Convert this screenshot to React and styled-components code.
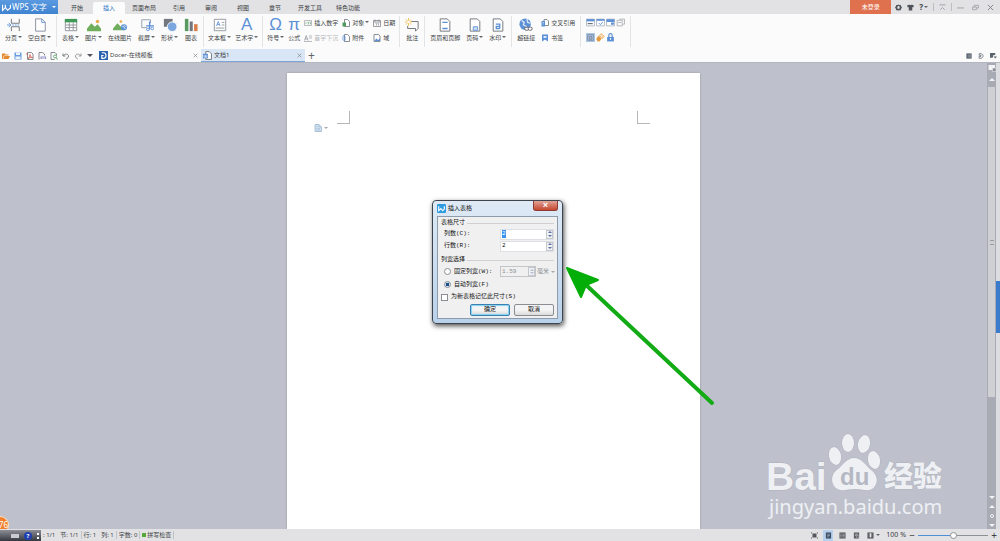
import { useEffect, useRef } from "react";
import styled, { createGlobalStyle } from "styled-components";

const BLUE = "#5b8fd6";
const GREY = "#666a70";

const icons = {
  pageBreak: (
    <>
      <path d="M5 1v5h9V1M5 15v-5h9v5" stroke={GREY} />
      <path d="M0 8h4M2 5.500l2.500 2.500L2 10.500" stroke={BLUE} />
      <path d="M6 8h9" stroke={BLUE} strokeDasharray="2 1" />
    </>
  ),
  blankPage: (
    <>
      <path d="M3 1h7l4 4v10H3z" stroke="#7c8696" fill="#fff" />
      <path d="M10 1v4h4" stroke={BLUE} />
    </>
  ),
  table: (
    <>
      <path d="M1.500 2h13v12.500h-13z" stroke="#8a8d92" fill="#fff" />
      <path d="M1 1h14v4H1z" fill="#3f9a58" />
      <path d="M2 8h12M2 11h12M6 5v9M10.500 5v9" stroke="#8a8d92" />
    </>
  ),
  picture: (
    <>
      <path d="M0 15V12l5-6 4 4 3-3 4 5v3z" fill="#6fae5c" />
      <circle cx="12" cy="4" r="2" fill="#eaa94a" />
    </>
  ),
  onlinePicture: (
    <>
      <path d="M0 14V12l5-6 4 4 3-3 1 7z" fill="#6fae5c" />
      <circle cx="9" cy="4" r="1.500" fill="#eaa94a" />
      <circle cx="12.500" cy="10.500" r="3.500" fill="#5b8fd6" />
      <path d="M10 9.500l3 1 1 2M12 8l3 2" stroke="#dbe8f8" />
    </>
  ),
  capture: (
    <>
      <path d="M12 6V2H2v9h6" stroke="#8c9aae" />
      <path d="M11 4v9M7 9h9" stroke={BLUE} strokeWidth="1.500" />
      <circle cx="9" cy="13" r="1.500" stroke={BLUE} />
      <circle cx="14" cy="12" r="1.500" stroke={BLUE} />
    </>
  ),
  shapes: (
    <>
      <path d="M1 1h10v9H1z" fill="#73777e" />
      <circle cx="10.500" cy="10" r="5.500" fill="#7ba6e0" stroke="#fff" />
    </>
  ),
  chart: (
    <>
      <path d="M1 1h4v14H1z" fill="#579a5f" />
      <path d="M6.500 4h3.500v11H6.500z" fill="#73777e" />
      <path d="M11.500 7h4v8h-4z" fill="#d9804a" />
    </>
  ),
  textBox: (
    <>
      <path d="M1.500 1.500h13v13h-13z" stroke="#8c9096" fill="#fff" />
      <path d="M4 9l2-5 2 5M5 7.500h2" stroke={BLUE} />
      <path d="M10 5h3M10 8h3M3 11.500h10" stroke="#8c9096" />
    </>
  ),
  comment: (
    <>
      <path d="M7 4h8v8l-3 3v-3H3V9" stroke="#666a70" />
      <path d="M4 0v9M0 4.500h8M1 1.500l6 6M7 1.500l-6 6" stroke="#f1bd4b" />
      <circle cx="4" cy="4.500" r="1.500" fill="#fff" />
    </>
  ),
  header: (
    <>
      <path d="M2.500 1h8l3 3v11h-11z" stroke={GREY} fill="#fff" />
      <path d="M5 5h6M5 12h6" stroke={BLUE} strokeWidth="1.500" />
    </>
  ),
  pageNumber: (
    <>
      <path d="M2.500 1h8l3 3v11h-11z" stroke={GREY} fill="#fff" />
      <path d="M6 10h5v4H6z" stroke={BLUE} fill="#cfe0f7" />
    </>
  ),
  watermark: (
    <>
      <path d="M2.500 1h8l3 3v11h-11z" stroke={GREY} fill="#fff" />
      <path d="M5.500 7h4.500v5M10 9.500H6v2.500h4" stroke={BLUE} strokeWidth="1.500" />
    </>
  ),
  hyperlink: (
    <>
      <circle cx="7" cy="7" r="6.500" fill="#5b8fd6" />
      <path d="M3 3l3 2-1 3 4 2M9 1l1 4 3 1" stroke="#dbe8f8" strokeWidth="1.500" />
      <rect x="6.500" y="10.500" width="4.500" height="3.500" rx="1.500" stroke="#55595f" fill="#fff" />
      <rect x="10.500" y="10.500" width="4.500" height="3.500" rx="1.500" stroke="#55595f" fill="#fff" />
    </>
  ),
  number: (
    <>
      <path d="M1 3h14v10H1z" stroke="#7c8086" />
      <path d="M4 6v4M7 6h2v4H7M11 6h2v4h-2" stroke="#4f9b5d" />
    </>
  ),
  dropCap: (
    <>
      <path d="M1 13L4.500 3 8 13M2 10h5" stroke="#a9abb0" strokeWidth="2" />
      <path d="M10 4h6M10 8h6M0 15h16" stroke="#b7b9bd" strokeWidth="2" />
    </>
  ),
  object: (
    <>
      <path d="M5 1h6l4 4v10H5z" stroke="#666a70" strokeWidth="1.500" fill="#fff" />
      <path d="M1 7h7v8H1z" fill="#4f9b5d" />
    </>
  ),
  attachment: (
    <>
      <path d="M5 1h6l4 4v10H5z" stroke="#666a70" strokeWidth="1.500" fill="#fff" />
      <path d="M2 12V5a2 2 0 0 1 4 0v7a1.500 1.500 0 0 1-3 0" stroke={BLUE} strokeWidth="1.500" />
    </>
  ),
  date: (
    <>
      <path d="M1 3h14v12H1zM1 6h14M4 1v4M12 1v4" stroke="#7c8086" strokeWidth="1.500" />
      <path d="M5 9h2v4M9 9h2v4" stroke={GREY} />
    </>
  ),
  field: (
    <>
      <path d="M2 1h9l3 3v11H2z" stroke={GREY} strokeWidth="1.500" fill="#fff" />
      <path d="M3 13l4-4 3 3 4-3v5H3z" fill="#5b8fd6" />
    </>
  ),
  crossRef: (
    <>
      <path d="M6 1h6l3 3v9H6z" stroke={GREY} strokeWidth="1.500" fill="#fff" />
      <path d="M1 4h7v11H1z" fill="#5b8fd6" />
      <path d="M3 7h3M3 10h3" stroke="#fff" />
    </>
  ),
  bookmark: (
    <>
      <path d="M2 1h12v14l-6-4-6 4z" fill="#5b8fd6" />
      <path d="M5 4h6v4H5z" fill="#dbe8f8" />
    </>
  ),
  formText: (
    <>
      <path d="M1 2h14v12H1z" stroke="#7c8ca4" fill="#fff" />
      <path d="M1 2h14v4H1z" fill="#5b8fd6" />
      <path d="M3 10h9" stroke={GREY} strokeWidth="2" />
    </>
  ),
  formCheck: (
    <>
      <path d="M1 2h14v12H1z" stroke="#7c8ca4" fill="#fff" />
      <path d="M1 2h14v3H1z" fill="#5b8fd6" />
      <path d="M5 9l3 3 4-5" stroke={BLUE} strokeWidth="1.500" />
    </>
  ),
  formCombo: (
    <>
      <path d="M1 2h14v12H1z" stroke="#7c8ca4" fill="#fff" />
      <path d="M1 2h14v5H1zM9 8h5v4H9z" fill="#5b8fd6" />
    </>
  ),
  formReset: (
    <path d="M2 4h9v10H2zM6 2h9v9h-3M4 8h5" stroke="#a9abb0" strokeWidth="1.500" />
  ),
  formShade: (
    <>
      <path d="M0 0h16v16H0z" fill="#a9c5e8" />
      <path d="M3 3h10v10H3z" stroke={GREY} />
      <path d="M6 6v5h4V6z" stroke={GREY} />
    </>
  ),
  eraser: (
    <>
      <path d="M1 9l4-4 5 5-4 5H3l-2-3z" fill="#e39b3e" />
      <path d="M6 4l4-3 5 5-4 4z" fill="#f5dcb4" stroke="#e39b3e" />
    </>
  ),
  lock: (
    <>
      <path d="M2 7h12v8H2z" fill="#5b8fd6" />
      <path d="M5 7V4a3 3 0 0 1 6 0v3" stroke={BLUE} strokeWidth="2" />
      <path d="M8 9v3" stroke="#fff" strokeWidth="2" />
    </>
  ),
  open: <path d="M0 3h6l1 2h6v2H4l-3 7H0zM5 8h11l-3 6H2z" fill="#e58a2c" />,
  save: (
    <>
      <path d="M1 1h14v14H1z" fill="#6c9edd" />
      <path d="M4 1h8v5H4zM3 9h10v5H3z" fill="#eff5fc" />
    </>
  ),
  pdf: (
    <>
      <path d="M3 1h8l3 3v11H3z" stroke={GREY} strokeWidth="1.500" />
      <path d="M4 13c3-2 4-5 4-8 0 4 3 6 5 6-3 0-6 0-9 2M0 4h4" stroke="#d2483c" strokeWidth="1.500" />
    </>
  ),
  print: (
    <>
      <path d="M2 15V1h7l4 3v3" stroke={GREY} strokeWidth="1.500" />
      <path d="M5 9h11v5H5z" fill="#8e8fc9" />
      <path d="M7 12h7" stroke="#fff" strokeWidth="2" />
    </>
  ),
  preview: (
    <>
      <path d="M13 7V4l-3-3H2v14h7" stroke={GREY} strokeWidth="1.500" />
      <circle cx="10" cy="9" r="3" stroke="#4f9b5d" strokeWidth="1.500" />
      <path d="M12 11l3 4" stroke="#4f9b5d" strokeWidth="2" />
    </>
  ),
  undo: <path d="M2 3v5h5M2 8c3-5 11-5 11 0 0 3-2 5-5 6" stroke="#7e8187" strokeWidth="2" />,
  redo: <path d="M14 3v5H9M14 8C11 3 3 3 3 8c0 3 2 5 5 6" stroke="#9b9da2" strokeWidth="2" />,
  docer: (
    <>
      <path d="M0 0h16v16H0z" fill="#2b62ad" />
      <path d="M5 3h3c6 0 6 10 0 10H5V8h3" stroke="#fff" strokeWidth="2" />
    </>
  ),
  doc: (
    <>
      <path d="M5 1h6l4 4v10H5z" stroke={GREY} strokeWidth="1.500" fill="#fff" />
      <path d="M0 5h9v8H0z" fill="#5b8fd6" />
      <path d="M2 7v4h5V7M4.500 7v4" stroke="#fff" />
    </>
  ),
  gear: (
    <path
      fillRule="evenodd"
      d="M8 1l2 1 3 0 1 3 2 3-2 3-1 3-3 0-2 1-2-1-3 0-1-3-2-3 2-3 1-3 3 0zM8 4L5 7l1 4h4l1-4z"
      fill="#505359"
    />
  ),
  shirt: <path d="M5 1c1 2 5 2 6 0l5 3-2 4-2-1v8H4V7L2 8 0 4z" fill="#505359" />,
  collapse: <path d="M1 2h14M3 13l5-5 5 5" stroke="#9b9da2" strokeWidth="2" />,
  minimize: <path d="M0 9h16" stroke="#9b9da2" strokeWidth="2" />,
  restore: <path d="M1 7h9v6H1zM5 7V3h10v6h-5" stroke="#a0a2a7" strokeWidth="2" />,
  close: <path d="M2 2l12 12M14 2L2 14" stroke="#777a80" strokeWidth="2" />,
  panel: (
    <>
      <path d="M1 1h14v14H1z" fill="#5c6470" />
      <path d="M6 4v8M8 5h5M8 8h5M8 11h5" stroke="#c8ccd2" />
    </>
  ),
  docPanel: <path d="M3 2h6c6 2 6 9 0 12H3V9h5V6H3z" stroke="#5c6470" strokeWidth="2" />,
  listPanel: <path d="M0 2h12v5H8l-2 6H0zM8 10h8l-4 5z" fill="#5c6470" />,
  fullscreen: <path d="M4 4h8v8H4zM0 3V1l3 2M16 3V1l-3 2M0 13v2l3-2M16 13v2l-3-2" fill="#55585e" stroke="#55585e" />,
  pageView: (
    <>
      <path d="M2 1h12v14H2z" fill="#3f4f66" />
      <path d="M5 5h6M5 8h6M5 11h4" stroke="#dbe8f8" />
    </>
  ),
  outline: (
    <>
      <path d="M1 1h14v14H1z" fill="#5c5f65" />
      <path d="M3 5h3M8 5h5M3 8h3M8 8h5M3 11h3M8 11h5" stroke="#e4e4e6" />
    </>
  ),
  web: (
    <>
      <path d="M2 1h12v14H2z" fill="#5c5f65" />
      <path d="M5 5h6M5 8h3" stroke="#e4e4e6" strokeWidth="1.500" />
      <circle cx="11" cy="11" r="3" fill="#5c5f65" stroke="#e4e4e6" />
    </>
  ),
  book: (
    <>
      <path d="M1 1h14v14H1z" fill="#5c5f65" />
      <path d="M6 3h4v8l-2 2-2-2z" fill="#e4e4e6" />
    </>
  ),
  paste: (
    <>
      <path d="M2 1h8l5 5v9H2z" fill="#cfe0f1" stroke="#9ab3cf" strokeWidth="1.500" />
      <path d="M5 5h3M5 9h7M5 12h7M10 1v5h5" stroke="#9ab3cf" />
    </>
  ),
  ruler: (
    <>
      <path d="M1 2h13v10H1z" fill="#f2f3f5" />
      <path d="M9 8h7v7H9z" fill="#8b8e98" stroke="#f2f3f5" />
    </>
  ),
  wps: <path d="M1 3v10l5-5 4 5 5-4V3M6 8V3" stroke="#fff" strokeWidth="2" />,
  dialogLogo: (
    <>
      <rect width="16" height="16" rx="2" fill="#2f9be0" />
      <path d="M3 4v8l4-4 3 4 3-3V4" stroke="#fff" strokeWidth="2" />
    </>
  ),
};

function Icon({ name, size = 8 }) {
  return (
    <svg width={size} height={size} viewBox="0 0 16 16" fill="none" aria-hidden="true">
      {icons[name]}
    </svg>
  );
}

function Tool({ icon, glyph, label, menu }) {
  return (
    <ToolButton type="button">
      {glyph ? <Glyph>{glyph}</Glyph> : <Icon name={icon} size={14} />}
      <ToolLabel>
        {label}
        {menu && <Caret />}
      </ToolLabel>
    </ToolButton>
  );
}

function SmallTool({ icon, label, menu, disabled }) {
  return (
    <SmallButton type="button" disabled={disabled}>
      <Icon name={icon} />
      <span>
        {label}
        {menu && <Caret />}
      </span>
    </SmallButton>
  );
}

const menus = [
  { label: "开始" },
  { label: "插入", active: true },
  { label: "页面布局", wide: true },
  { label: "引用" },
  { label: "审阅" },
  { label: "视图" },
  { label: "章节" },
  { label: "开发工具", wide: true },
  { label: "特色功能", wide: true },
];

const quickActions = [
  ["open", "打开"],
  ["save", "保存"],
  ["pdf", "输出为PDF"],
  ["print", "打印"],
  ["preview", "打印预览"],
  ["undo", "撤消"],
  ["redo", "恢复"],
];

function TitleBar() {
  return (
    <Title>
      <Brand type="button">
        <Icon name="wps" size={9} />
        WPS 文字
        <BrandCaret />
      </Brand>
      <MenuTabs>
        {menus.map((m) => (
          <MenuTab key={m.label} type="button" $active={m.active} $wide={m.wide}>
            {m.label}
          </MenuTab>
        ))}
      </MenuTabs>
      <Login type="button">未登录</Login>
      <WindowTools>
        <IconButton aria-label="设置"><Icon name="gear" size={7} /></IconButton>
        <IconButton aria-label="皮肤"><Icon name="shirt" size={7} /></IconButton>
        <HelpButton type="button">?<Caret /></HelpButton>
        <Divider />
        <IconButton aria-label="折叠功能区"><Icon name="collapse" size={7} /></IconButton>
        <Divider />
      </WindowTools>
      <WindowButtons>
        <IconButton aria-label="最小化"><Icon name="minimize" size={7} /></IconButton>
        <IconButton aria-label="还原"><Icon name="restore" size={7} /></IconButton>
        <IconButton aria-label="关闭"><Icon name="close" size={7} /></IconButton>
      </WindowButtons>
    </Title>
  );
}

function Ribbon() {
  return (
    <RibbonBar>
      <Group>
        <Tool icon="pageBreak" label="分页" menu />
        <Tool icon="blankPage" label="空白页" menu />
      </Group>
      <Group>
        <Tool icon="table" label="表格" menu />
        <Tool icon="picture" label="图片" menu />
        <Tool icon="onlinePicture" label="在线图片" />
        <Tool icon="capture" label="截屏" menu />
        <Tool icon="shapes" label="形状" menu />
        <Tool icon="chart" label="图表" />
      </Group>
      <Group $tight>
        <Tool icon="textBox" label="文本框" menu />
        <Tool glyph="A" label="艺术字" menu />
      </Group>
      <Group $tight>
        <Tool glyph="Ω" label="符号" menu />
        <Tool glyph="π" label="公式" />
        <Stack>
          <SmallTool icon="number" label="插入数字" />
          <SmallTool icon="dropCap" label="首字下沉" disabled />
        </Stack>
        <Stack>
          <SmallTool icon="object" label="对象" menu />
          <SmallTool icon="attachment" label="附件" />
        </Stack>
        <Stack>
          <SmallTool icon="date" label="日期" />
          <SmallTool icon="field" label="域" />
        </Stack>
      </Group>
      <Group>
        <Tool icon="comment" label="批注" />
      </Group>
      <Group>
        <Tool icon="header" label="页眉和页脚" />
        <Tool icon="pageNumber" label="页码" menu />
        <Tool icon="watermark" label="水印" menu />
      </Group>
      <Group>
        <Tool icon="hyperlink" label="超链接" />
        <Stack>
          <SmallTool icon="crossRef" label="交叉引用" />
          <SmallTool icon="bookmark" label="书签" />
        </Stack>
      </Group>
      <Group>
        <FormGrid>
          <IconButton aria-label="文字型窗体域"><Icon name="formText" size={9} /></IconButton>
          <IconButton aria-label="复选框型窗体域"><Icon name="formCheck" size={9} /></IconButton>
          <IconButton aria-label="下拉型窗体域"><Icon name="formCombo" size={9} /></IconButton>
          <IconButton aria-label="窗体域选项"><Icon name="formReset" size={9} /></IconButton>
          <IconButton aria-label="窗体域底纹"><Icon name="formShade" size={9} /></IconButton>
          <IconButton aria-label="重新设置"><Icon name="eraser" size={9} /></IconButton>
          <IconButton aria-label="保护窗体"><Icon name="lock" size={9} /></IconButton>
        </FormGrid>
      </Group>
    </RibbonBar>
  );
}

function DocumentBar() {
  return (
    <DocBar>
      <QuickAccess>
        {quickActions.map(([icon, label]) => (
          <IconButton key={icon} aria-label={label}>
            <Icon name={icon} />
          </IconButton>
        ))}
      </QuickAccess>
      <MoreButton aria-label="自定义"><BigCaret /></MoreButton>
      <DocTab>
        <Icon name="docer" size={9} />
        <DocName>Docer-在线模板</DocName>
        <IconButton aria-label="关闭标签"><Icon name="close" size={5} /></IconButton>
      </DocTab>
      <DocTab $active>
        <Icon name="doc" size={9} />
        <DocName>文档1</DocName>
        <IconButton aria-label="关闭标签"><Icon name="close" size={5} /></IconButton>
      </DocTab>
      <AddTab type="button" aria-label="新建标签">+</AddTab>
      <PanelTools>
        <IconButton aria-label="任务窗格"><Icon name="panel" size={6} /></IconButton>
        <IconButton aria-label="文档窗格"><Icon name="docPanel" size={6} /></IconButton>
        <IconButton aria-label="标签列表"><Icon name="listPanel" size={7} /></IconButton>
      </PanelTools>
    </DocBar>
  );
}

function Spinner({ disabled }) {
  return (
    <Steps>
      <Step type="button" aria-label="增加" disabled={disabled}><StepMark $up /></Step>
      <Step type="button" aria-label="减少" disabled={disabled}><StepMark /></Step>
    </Steps>
  );
}

function InsertTableDialog() {
  const columns = useRef(null);

  useEffect(() => {
    columns.current.focus();
    columns.current.select();
  }, []);

  return (
    <Dialog role="dialog" aria-labelledby="dialog-title">
      <DialogTitle>
        <Icon name="dialogLogo" size={9} />
        <span id="dialog-title">插入表格</span>
        <DialogClose type="button" aria-label="关闭">×</DialogClose>
      </DialogTitle>
      <DialogBody>
        <Legend>表格尺寸</Legend>
        <FieldRow>
          <label htmlFor="columns">列数(C):</label>
          <NumberBox>
            <NumberInput id="columns" ref={columns} defaultValue="2" />
            <Spinner />
          </NumberBox>
        </FieldRow>
        <FieldRow>
          <label htmlFor="rows">行数(R):</label>
          <NumberBox>
            <NumberInput id="rows" defaultValue="2" />
            <Spinner />
          </NumberBox>
        </FieldRow>
        <Legend $spaced>列宽选择</Legend>
        <FieldRow $tall>
          <Choice>
            <Radio type="radio" name="width" />
            固定列宽(W):
          </Choice>
          <NumberBox $short $disabled>
            <NumberInput aria-label="固定列宽" defaultValue="1.59" disabled />
            <Spinner disabled />
          </NumberBox>
          <Unit aria-label="单位" disabled>
            <option>毫米</option>
          </Unit>
          <Caret $muted />
        </FieldRow>
        <FieldRow $tall>
          <Choice>
            <Radio type="radio" name="width" defaultChecked />
            自动列宽(F)
          </Choice>
        </FieldRow>
        <Remember>
          <Checkbox type="checkbox" />
          为新表格记忆此尺寸(S)
        </Remember>
        <Actions>
          <DialogButton type="button" $primary>确定</DialogButton>
          <DialogButton type="button">取消</DialogButton>
        </Actions>
      </DialogBody>
    </Dialog>
  );
}

function Watermark() {
  return (
    <WatermarkArt viewBox="0 0 180 90" width="180" height="90" aria-label="Baidu 经验">
      <g fill="#eef0f4" stroke="#b0b3be" strokeWidth="1" paintOrder="stroke">
        <text x="-2" y="59" fontSize="39" fontWeight="700" fontFamily="Liberation Sans, sans-serif">
          Bai
        </text>
        <g transform="translate(-3 -1)">
          <ellipse cx="70" cy="26" rx="6" ry="9" transform="rotate(-12 70 26)" />
          <ellipse cx="83" cy="13" rx="6" ry="9" />
          <ellipse cx="99" cy="14" rx="6" ry="9" transform="rotate(12 99 14)" />
          <ellipse cx="109" cy="30" rx="6" ry="9" transform="rotate(-12 109 30)" />
          <path d="M89 28C82 28 78 35 73 39C66 44 66 51 69 56C74 63 82 59 90 59C98 59 106 63 110 56C114 50 111 44 106 40C100 35 97 28 89 28Z" />
        </g>
        <text x="116" y="56" fontSize="29" fontWeight="900" fontFamily="Noto Sans CJK SC, sans-serif">
          经验
        </text>
        <text x="1" y="83" fontSize="20" strokeWidth="0" fontFamily="Noto Sans, sans-serif">
          jingyan.baidu.com
        </text>
      </g>
      <text x="72" y="54" fontSize="24" fontWeight="700" fill="#b5b8c3" fontFamily="Liberation Sans, sans-serif">
        du
      </text>
    </WatermarkArt>
  );
}

function Workspace() {
  return (
    <Work>
      <Canvas>
        <Page>
          <Margins>
            <Corner />
            <Corner $right />
          </Margins>
          <PasteHint type="button" aria-label="粘贴选项">
            <Icon name="paste" />
            <Caret $muted />
          </PasteHint>
        </Page>
      </Canvas>
      <ScrollBar>
        <Icon name="ruler" />
        <ScrollArrow $up />
        <Track>
          <Thumb><Grip /></Thumb>
        </Track>
        <ScrollArrow />
        <ScrollArrow $up />
        <BrowseDot />
        <ScrollArrow />
      </ScrollBar>
      <SideStrip>
        <SideHandle type="button" aria-label="展开任务窗格" />
      </SideStrip>
      <InsertTableDialog />
      <Pointer viewBox="0 0 152 142" width="152" height="142" aria-hidden="true">
        <path d="M20 19L147 138" stroke="#12ab16" strokeWidth="4" strokeLinecap="round" />
        <path d="M2 3L33 15L21 20L16 32Z" fill="#04ae08" stroke="#04ae08" strokeWidth="2" strokeLinejoin="round" />
      </Pointer>
      <Watermark />
      <Badge>76</Badge>
    </Work>
  );
}

function StatusBar() {
  return (
    <Status>
      <ImeBar>
        <KeyboardMark />
        <HelpDot>?</HelpDot>
        <ImeMore />
      </ImeBar>
      <StatusInfo>
        <StatusItem>: 1/1</StatusItem>
        <StatusItem $line>节: 1/1</StatusItem>
        <StatusItem>行: 1</StatusItem>
        <StatusItem $line>列: 1</StatusItem>
        <StatusItem $line>字数: 0</StatusItem>
        <StatusItem $line><SpellDot />拼写检查</StatusItem>
      </StatusInfo>
      <Views>
        <ViewButton aria-label="全屏显示"><Icon name="fullscreen" size={7} /></ViewButton>
        <ViewButton aria-label="页面视图" $active><Icon name="pageView" size={7} /></ViewButton>
        <ViewButton aria-label="大纲视图"><Icon name="outline" size={7} /></ViewButton>
        <ViewButton aria-label="Web版式"><Icon name="web" size={7} /></ViewButton>
        <ViewButton aria-label="阅读版式"><Icon name="book" size={7} /></ViewButton>
      </Views>
      <Caret />
      <Zoom htmlFor="zoom">100 %</Zoom>
      <ZoomButton type="button" aria-label="缩小">−</ZoomButton>
      <Slider id="zoom" type="range" min="0" max="100" defaultValue="50" />
      <ZoomButton type="button" aria-label="放大">+</ZoomButton>
    </Status>
  );
}

export default function App() {
  return (
    <>
      <GlobalStyle />
      <Shell>
        <TitleBar />
        <Ribbon />
        <DocumentBar />
        <Workspace />
        <StatusBar />
      </Shell>
    </>
  );
}

const GlobalStyle = createGlobalStyle`
  * {
    box-sizing: border-box;
  }
  body {
    margin: 0;
    overflow: hidden;
    font-family: "Noto Sans", "Noto Sans CJK SC", sans-serif;
    font-size: 6px;
    line-height: 8px;
    color: #3c3f44;
  }
  button, input, select {
    font: inherit;
    color: inherit;
    margin: 0;
    padding: 0;
    border: none;
    background: none;
    outline: none;
  }
  button {
    white-space: nowrap;
  }
  svg {
    display: block;
    flex-shrink: 0;
  }
`;

const Shell = styled.div`
  display: flex;
  flex-direction: column;
  height: 100vh;
`;

const Caret = styled.span`
  display: inline-block;
  flex-shrink: 0;
  margin-left: 1px;
  vertical-align: 2px;
  border: solid transparent;
  border-width: 2px 2px 0;
  border-top-color: ${({ $muted }) => ($muted ? "#a5a8ad" : "#63666b")};
`;

const BigCaret = styled.span`
  border: solid transparent;
  border-width: 3px 3px 0;
  border-top-color: #505359;
`;

const IconButton = styled.button`
  display: flex;
  align-items: center;
  justify-content: center;
`;

const MoreButton = styled(IconButton)`
  padding-right: 4px;
`;

const Title = styled.header`
  display: flex;
  height: 14px;
  background: #e2e2e4;
`;

const Brand = styled.button`
  display: flex;
  align-items: center;
  gap: 1px;
  width: 58px;
  padding-left: 2px;
  background: linear-gradient(#5b9ae0, #3f83d0);
  color: #fff;
  font-size: 8px;
`;

const BrandCaret = styled(Caret)`
  margin-left: auto;
  margin-right: 2px;
  border-top-color: #fff;
`;

const MenuTabs = styled.nav`
  display: flex;
  flex: 1;
  padding-left: 3px;
`;

const MenuTab = styled.button`
  width: ${({ $wide }) => ($wide ? "38px" : "32px")};
  margin-top: 2px;
  border-radius: 2px 2px 0 0;
  background: ${({ $active }) => ($active ? "#fbfbfb" : "none")};
  color: ${({ $active }) => ($active ? "#2f74c8" : "#3c3f44")};
`;

const Login = styled.button`
  width: 41px;
  background: #e0714f;
  color: #fff;
`;

const WindowTools = styled.div`
  display: flex;
  align-items: center;
  gap: 5px;
  padding-left: 4px;
`;

const HelpButton = styled.button`
  font-size: 8px;
  font-weight: 700;
`;

const Divider = styled.span`
  width: 1px;
  height: 8px;
  background: #bcbdc1;
`;

const WindowButtons = styled.div`
  display: flex;
  align-items: center;
  gap: 8px;
  padding: 0 6px 0 5px;
`;

const RibbonBar = styled.div`
  display: flex;
  height: 35px;
  padding-top: 2px;
  background: #fbfbfb;
`;

const Group = styled.div`
  display: flex;
  height: 31px;
  gap: ${({ $tight }) => ($tight ? "4px" : "6px")};
  padding: 0 ${({ $tight }) => ($tight ? "4px" : "5px")};
  border-right: 1px solid #e3e4e6;
`;

const ToolButton = styled.button`
  display: flex;
  flex-direction: column;
  align-items: center;
  gap: 2px;
  padding-top: 2px;
`;

const ToolLabel = styled.span`
  display: block;
`;

const Glyph = styled.span`
  height: 14px;
  color: #5b8fd6;
  font-family: "Liberation Sans", sans-serif;
  font-size: 17px;
  line-height: 14px;
`;

const Stack = styled.div`
  display: flex;
  flex-direction: column;
  gap: 6px;
  padding-top: 2px;
`;

const SmallButton = styled.button`
  display: flex;
  align-items: center;
  gap: 2px;
  height: 9px;

  &:disabled {
    color: #b4b6ba;
  }
`;

const FormGrid = styled.div`
  display: grid;
  grid-template-columns: repeat(4, 9px);
  align-content: start;
  gap: 6px 1px;
  padding-top: 2px;
`;

const DocBar = styled.div`
  display: flex;
  align-items: center;
  height: 14px;
  background: #fbfbfb;
  border-bottom: 1px solid #b3b5bf;
`;

const QuickAccess = styled.div`
  display: flex;
  gap: 4px;
  padding: 0 5px 0 2px;
`;

const DocTab = styled.div`
  display: flex;
  align-items: center;
  gap: 2px;
  width: 104px;
  height: 13px;
  padding: 0 3px 0 2px;
  border-bottom: 1px solid transparent;
  ${({ $active }) =>
    $active &&
    `
    background: #d9e6f5;
    border-bottom-color: #7ea3d6;
  `}
`;

const DocName = styled.span`
  flex: 1;
`;

const AddTab = styled.button`
  padding-left: 3px;
  color: #63666b;
  font-size: 12px;
`;

const PanelTools = styled.div`
  display: flex;
  gap: 6px;
  margin-left: auto;
  padding-right: 3px;
`;

const Work = styled.main`
  position: relative;
  display: flex;
  flex: 1;
  min-height: 0;
  overflow: hidden;
`;

const Canvas = styled.div`
  display: flex;
  flex: 1;
  justify-content: center;
  padding-top: 10px;
  background: #bec1cb;
`;

const Page = styled.article`
  width: 413px;
  padding-top: 38px;
  background: #fff;
  box-shadow: 0 0 2px #8f929c;
`;

const Margins = styled.div`
  display: flex;
  justify-content: space-between;
  padding: 0 50px;
`;

const Corner = styled.span`
  width: 13px;
  height: 13px;
  border: solid #b5b6b9;
  border-width: ${({ $right }) => ($right ? "0 0 1px 1px" : "0 1px 1px 0")};
`;

const PasteHint = styled.button`
  display: flex;
  align-items: center;
  gap: 1px;
  margin-left: 27px;
`;

const ScrollBar = styled.div`
  display: flex;
  flex-direction: column;
  align-items: center;
  gap: 6px;
  width: 9px;
  padding: 1px 0 2px;
  background: #a8aab4;
`;

const ScrollArrow = styled.span`
  border: 3px solid transparent;
  border-width: ${({ $up }) => ($up ? "0 3px 3px" : "3px 3px 0")};
  border-color: ${({ $up }) => ($up ? "transparent transparent #f2f3f5" : "#f2f3f5 transparent transparent")};
`;

const Track = styled.div`
  flex: 1;
  width: 7px;
`;

const Thumb = styled.div`
  display: flex;
  align-items: center;
  justify-content: center;
  height: 77%;
  background: #cfd0d4;
`;

const Grip = styled.span`
  width: 4px;
  height: 5px;
  border: solid #9a9ca3;
  border-width: 1px 0;
`;

const BrowseDot = styled.span`
  width: 4px;
  height: 4px;
  border: 1px solid #f2f3f5;
  border-radius: 50%;
`;

const SideStrip = styled.aside`
  width: 4px;
  padding-top: 218px;
  background: #dcdde1;
`;

const SideHandle = styled.button`
  display: block;
  width: 100%;
  height: 52px;
  background: #3b7bcb;
`;

const Dialog = styled.section`
  position: absolute;
  top: 137px;
  left: 432px;
  width: 131px;
  padding: 0 4px 4px;
  border: 1px solid #3d444e;
  border-radius: 4px;
  background: linear-gradient(#dfeaf6, #b9d1ea);
  box-shadow: 1px 2px 5px rgba(0, 0, 0, 0.7);
  font-family: "Liberation Mono", "Noto Sans CJK SC", monospace;
  color: #111;
`;

const DialogTitle = styled.div`
  display: flex;
  align-items: center;
  gap: 2px;
  height: 15px;
`;

const DialogClose = styled.button`
  align-self: flex-start;
  width: 25px;
  height: 10px;
  margin-left: auto;
  border: 1px solid #8d3b33;
  border-top: none;
  border-radius: 0 0 3px 3px;
  background: linear-gradient(#e3a397, #c4472f);
  color: #fff;
  font-size: 9px;
  font-weight: 700;
  line-height: 8px;
`;

const DialogBody = styled.div`
  display: flex;
  flex-direction: column;
  padding: 2px 3px;
  border: 1px solid #8d9cad;
  background: #f0f0f0;
`;

const Legend = styled.div`
  display: flex;
  align-items: center;
  gap: 2px;
  margin-top: ${({ $spaced }) => ($spaced ? "4px" : "0")};

  &::after {
    content: "";
    flex: 1;
    height: 1px;
    background: #d0d0d2;
  }
`;

const FieldRow = styled.div`
  display: flex;
  align-items: center;
  height: ${({ $tall }) => ($tall ? "13px" : "12px")};
  margin-top: 1px;
  padding-left: 3px;

  & + & {
    margin-top: 0;
  }

  & > label {
    width: 56px;
  }
`;

const NumberBox = styled.span`
  display: flex;
  width: ${({ $short }) => ($short ? "36px" : "54px")};
  height: 11px;
  border: 1px solid ${({ $disabled }) => ($disabled ? "#c4c5c8" : "#dcdfe4")};
  background: ${({ $disabled }) => ($disabled ? "#f0f0f0" : "#fff")};
  color: ${({ $disabled }) => ($disabled ? "#8e9094" : "#111")};
`;

const NumberInput = styled.input`
  flex: 1;
  min-width: 0;
  padding-left: 1px;

  &::selection {
    background: #3593f0;
    color: #fff;
  }
`;

const Steps = styled.span`
  display: flex;
  flex-direction: column;
  width: 7px;
  border: 1px solid #c4c7cd;
`;

const Step = styled.button`
  display: flex;
  flex: 1;
  align-items: center;
  justify-content: center;
  background: #f0f1f3;
`;

const StepMark = styled.span`
  border: solid transparent;
  border-width: ${({ $up }) => ($up ? "0 2px 2px" : "2px 2px 0")};
  border-color: ${({ $up }) => ($up ? "transparent transparent #5a70a0" : "#5a70a0 transparent transparent")};

  button:disabled & {
    opacity: 0.4;
  }
`;

const Choice = styled.label`
  display: flex;
  align-items: center;
  gap: 3px;
  flex-shrink: 0;
  white-space: nowrap;
`;

const Radio = styled.input`
  appearance: none;
  flex-shrink: 0;
  width: 7px;
  height: 7px;
  border: 1px solid #8a8d92;
  border-radius: 50%;
  background: #fff;

  &:checked {
    background: radial-gradient(#1d4f86 40%, #cfe3f5 55%);
  }
`;

const Unit = styled.select`
  appearance: none;
  margin-left: 1px;
  color: #8e9094;
  opacity: 1;
`;

const Remember = styled(Choice)`
  margin-top: 2px;
`;

const Checkbox = styled.input`
  appearance: none;
  width: 7px;
  height: 7px;
  border: 1px solid #8a8d92;
  background: #fff;
`;

const Actions = styled.div`
  display: flex;
  justify-content: flex-end;
  gap: 4px;
  margin-top: 3px;
`;

const DialogButton = styled.button`
  width: 40px;
  height: 12px;
  border: 1px solid ${({ $primary }) => ($primary ? "#3c7fb1" : "#8a8d92")};
  border-radius: 2px;
  background: linear-gradient(#f4f4f4 50%, #dadada);
  box-shadow: ${({ $primary }) => ($primary ? "inset 0 0 1px 1px #7fd3f2" : "none")};
`;

const Pointer = styled.svg`
  position: absolute;
  top: 202px;
  left: 565px;
`;

const WatermarkArt = styled.svg`
  position: absolute;
  right: 52px;
  bottom: 8px;
  overflow: visible;
`;

const Badge = styled.span`
  position: absolute;
  bottom: -5px;
  left: -9px;
  width: 18px;
  height: 18px;
  border: 1px solid #fbe3c8;
  border-radius: 50%;
  background: #f2802c;
  color: #fff;
  font-size: 8px;
  line-height: 16px;
  text-align: right;
`;

const Status = styled.footer`
  display: flex;
  align-items: center;
  height: 12px;
  padding-right: 2px;
  background: #e2e2e4;
`;

const ImeBar = styled.div`
  display: flex;
  align-items: center;
  justify-content: flex-end;
  gap: 5px;
  width: 41px;
  height: 11px;
  padding-right: 2px;
  align-self: flex-end;
  background: linear-gradient(#8d8f96, #34373f);
`;

const KeyboardMark = styled.span`
  width: 8px;
  height: 4px;
  background: #c9cbd0;
`;

const HelpDot = styled.span`
  width: 8px;
  height: 8px;
  border-radius: 50%;
  background: #1f3fb0;
  color: #fff;
  font-weight: 700;
  text-align: center;
`;

const ImeMore = styled.span`
  width: 2px;
  height: 6px;
  border: solid #fff;
  border-width: 2px 0;
`;

const StatusInfo = styled.div`
  display: flex;
  flex: 1;
`;

const StatusItem = styled.span`
  display: flex;
  align-items: center;
  gap: 1px;
  padding: 0 2px;
  white-space: nowrap;
  border-right: 1px solid ${({ $line }) => ($line ? "#c2c3c7" : "transparent")};
`;

const SpellDot = styled.span`
  width: 4px;
  height: 4px;
  background: #55a838;
`;

const Views = styled.div`
  display: flex;
  align-items: center;
  gap: 4px;
`;

const ViewButton = styled(IconButton)`
  width: 10px;
  height: 11px;
  background: ${({ $active }) => ($active ? "#b7d0ee" : "none")};
`;

const Zoom = styled.label`
  padding: 0 2px 0 6px;
  font-size: 7px;
`;

const ZoomButton = styled.button`
  width: 8px;
  font-size: 10px;
`;

const Slider = styled.input`
  appearance: none;
  width: 70px;
  height: 8px;
  margin: 0 2px;

  &::-webkit-slider-runnable-track {
    height: 1px;
    background: linear-gradient(to right, #4f8fd8 50%, #8e9196 50%);
  }

  &::-webkit-slider-thumb {
    appearance: none;
    width: 7px;
    height: 7px;
    margin-top: -3px;
    border: 1px solid #8e9196;
    border-radius: 50%;
    background: #fff;
  }
`;
